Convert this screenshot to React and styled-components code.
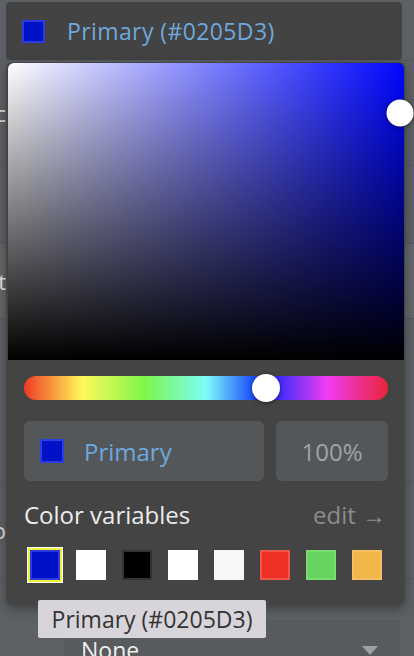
import styled, { createGlobalStyle } from "styled-components"

const swatches = [
    { id: 1, color: "#0012c8", edge: "#2b3de0", active: true },
    { id: 2, color: "#ffffff", edge: "#ffffff" },
    { id: 3, color: "#000000", edge: "#333333" },
    { id: 4, color: "#ffffff", edge: "#ffffff" },
    { id: 5, color: "#f7f7f7", edge: "#f7f7f7" },
    { id: 6, color: "#ee3124", edge: "#f2554a" },
    { id: 7, color: "#66d45f", edge: "#78dc70" },
    { id: 8, color: "#f2b648", edge: "#f4c060" },
]

// rows of the property panel behind the popup
const bgRows = [
    { id: 1, label: "", height: 58 },
    { id: 2, label: "c", height: 104 },
    { id: 3, label: "", height: 77 },
    { id: 4, label: "t", height: 74, light: true },
    { id: 5, label: "", height: 162 },
    { id: 6, label: "o", height: 96 },
    { id: 7, label: "", height: 80 },
]

const GlobalStyle = createGlobalStyle`
    body {
        margin: 0;
        background-color: #5d6165;
        font-family: "Open Sans", "Noto Sans", sans-serif;
    }
`

const Page = styled.div`
    width: 414px;
    height: 656px;
    position: relative;
    overflow: hidden;
    background-color: #5d6165;
`
const Backdrop = styled.div`
    display: flex;
    flex-direction: column;
    padding-top: 2px;
`
const BgRow = styled.div`
    height: ${props => props.height}px;
    display: flex;
    border-bottom: 1px solid #565a5e;
    background-color: ${props => props.light ? "#63676b" : "transparent"};
`
const BgLabel = styled.div`
    width: 6px;
    display: flex;
    justify-content: flex-end;
    align-items: center;
    color: #e6e6e6;
    font-size: 22px;
    line-height: 1;
    white-space: nowrap;
`
const Field = styled.div`
    width: 396px;
    height: 58px;
    background-color: #434343;
    border-radius: 4px;
    display: flex;
    align-items: center;
    gap: 22px;
    padding-left: 16px;
    box-sizing: border-box;
`
const Chip = styled.div`
    width: ${props => props.size}px;
    height: ${props => props.size}px;
    box-sizing: border-box;
    background-color: #0012c8;
    border: 2px solid #2b3de0;
    flex-shrink: 0;
`
const Value = styled.span`
    color: #6fa8dc;
    font-size: 23px;
    letter-spacing: 0.4px;
`
const Dropdown = styled.div`
    position: absolute;
    left: 64px;
    top: 620px;
    width: 336px;
    height: 60px;
    background-color: #575b5e;
    display: flex;
    align-items: center;
    justify-content: space-between;
    padding: 0 22px 0 17px;
    box-sizing: border-box;
    color: #eeeeee;
    font-size: 23px;
`
const Caret = styled.div`
    width: 0;
    height: 0;
    border-left: 8px solid transparent;
    border-right: 8px solid transparent;
    border-top: 9px solid #a0a0a0;
`
const Popup = styled.div`
    position: absolute;
    left: 6px;
    top: 62px;
    width: 399px;
    height: 543px;
    background-color: #444444;
    border-radius: 6px;
    box-shadow: 0 4px 12px rgba(0, 0, 0, 0.35);
    display: flex;
    flex-direction: column;
`
const Picker = styled.div`
    position: relative;
    height: 297px;
    margin: 1px 1px 0 2px;
    border-radius: 6px 6px 0 0;
    background:
        linear-gradient(to top, #000000, rgba(0, 0, 0, 0)),
        linear-gradient(to right, #ffffff, rgb(0, 6, 255));
`
const Knob = styled.div`
    position: absolute;
    width: ${props => props.size}px;
    height: ${props => props.size}px;
    border-radius: 50%;
    background-color: #ffffff;
    box-shadow: 0 1px 4px rgba(0, 0, 0, 0.5);
    transform: translate(-50%, -50%);
`
const Body = styled.div`
    display: flex;
    flex-direction: column;
    padding: 16px 17px 0 18px;
`
const Hue = styled.div`
    position: relative;
    height: 24px;
    border-radius: 12px;
    background: linear-gradient(to right,
        #ef3a24 0%, #fff95a 16%, #7ef64a 33%, #7dfcf9 50%,
        #0626fa 66%, #ef3cf4 83%, #e9253a 100%);
`
const Inputs = styled.div`
    display: flex;
    gap: 12px;
    margin-top: 21px;
`
const Box = styled.div`
    height: 60px;
    flex: ${props => props.grow};
    box-sizing: border-box;
    background-color: #54575a;
    border-radius: 6px;
    display: flex;
    align-items: center;
    justify-content: ${props => props.center ? "center" : "flex-start"};
    gap: 20px;
    padding-left: ${props => props.center ? 0 : 16}px;
    color: ${props => props.center ? "#a2a2a2" : "#6fa8dc"};
    font-size: 24px;
`
const VarsHead = styled.div`
    display: flex;
    justify-content: space-between;
    align-items: center;
    margin-top: 17px;
    height: 32px;
`
const VarsTitle = styled.span`
    color: #ececec;
    font-size: 24px;
`
const EditLink = styled.span`
    color: #8c8c8c;
    font-size: 24px;
    padding-right: 2px;
`
const SwatchRow = styled.div`
    display: flex;
    gap: 16px;
    margin-top: 20px;
    padding-left: 6px;
`
const Swatch = styled.div`
    width: 30px;
    height: 30px;
    box-sizing: border-box;
    background-color: ${props => props.color};
    border: 2px solid ${props => props.edge};
    box-shadow: ${props => props.active ? "0 0 0 2px #f4ee3c, 0 0 0 3px #ffffff" : "none"};
`
const Tooltip = styled.div`
    position: absolute;
    left: 38px;
    top: 600px;
    width: 228px;
    height: 38px;
    background-color: #d8d5da;
    border-radius: 2px;
    color: #333333;
    font-size: 23px;
    display: flex;
    align-items: center;
    justify-content: center;
`

const App = () => {
    return (
        <Page>
            <GlobalStyle />
            <Backdrop>
                {bgRows.map((row, i) => (
                    <BgRow key={row.id} height={row.height} light={row.light}>
                        <BgLabel>{row.label}</BgLabel>
                        {i === 0 && (
                            <Field>
                                <Chip size={23} />
                                <Value>Primary (#0205D3)</Value>
                            </Field>
                        )}
                    </BgRow>
                ))}
            </Backdrop>
            <Dropdown>
                <span>None</span>
                <Caret />
            </Dropdown>
            <Popup>
                <Picker>
                    <Knob size={27} style={{ left: "99%", top: "17%" }} />
                </Picker>
                <Body>
                    <Hue>
                        <Knob size={28} style={{ left: "66.4%", top: "50%" }} />
                    </Hue>
                    <Inputs>
                        <Box grow="0 0 240px">
                            <Chip size={24} />
                            <span>Primary</span>
                        </Box>
                        <Box grow="1" center>100%</Box>
                    </Inputs>
                    <VarsHead>
                        <VarsTitle>Color variables</VarsTitle>
                        <EditLink>edit →</EditLink>
                    </VarsHead>
                    <SwatchRow>
                        {swatches.map((s) => (
                            <Swatch key={s.id} color={s.color} edge={s.edge} active={s.active} />
                        ))}
                    </SwatchRow>
                </Body>
            </Popup>
            <Tooltip>Primary (#0205D3)</Tooltip>
        </Page>
    )
}

export default App
